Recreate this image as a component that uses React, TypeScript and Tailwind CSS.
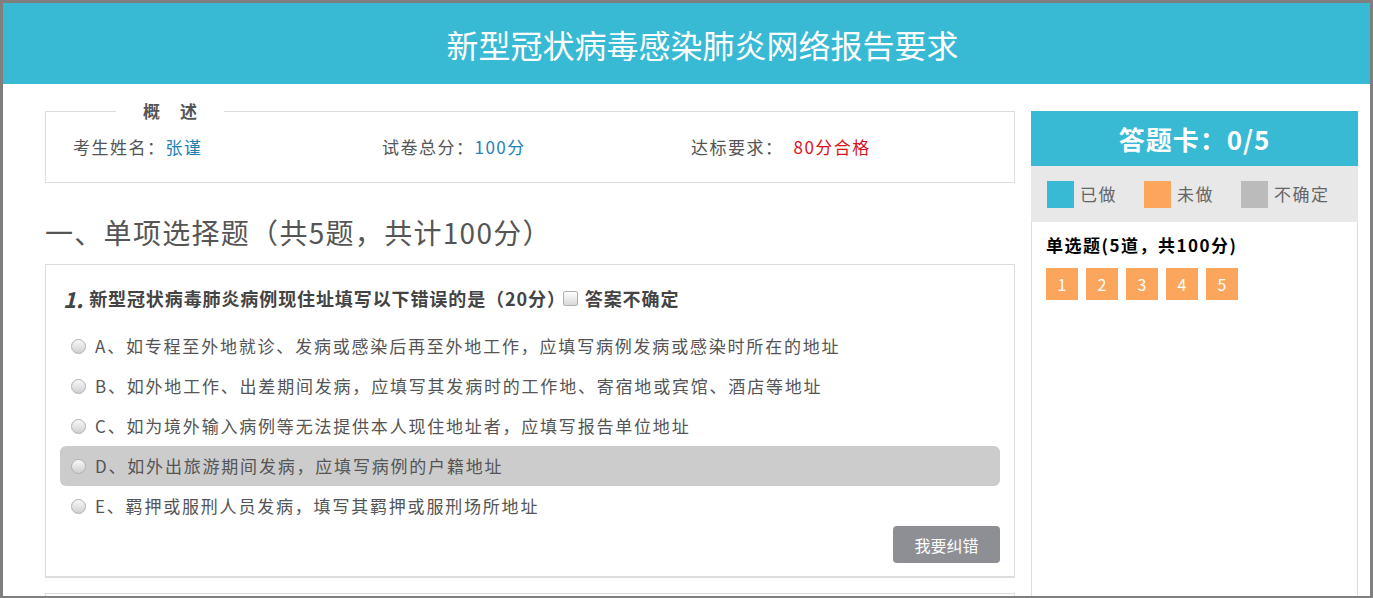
const options = [
  "A、如专程至外地就诊、发病或感染后再至外地工作，应填写病例发病或感染时所在的地址",
  "B、如外地工作、出差期间发病，应填写其发病时的工作地、寄宿地或宾馆、酒店等地址",
  "C、如为境外输入病例等无法提供本人现住地址者，应填写报告单位地址",
  "D、如外出旅游期间发病，应填写病例的户籍地址",
  "E、羁押或服刑人员发病，填写其羁押或服刑场所地址",
];

const font = "font-['Noto_Sans_CJK_SC','Noto_Sans',sans-serif]";

function Radio() {
  return (
    <span className="inline-block h-[15px] w-[15px] shrink-0 rounded-full border border-[#b0b0b0] bg-linear-to-b from-[#f8f8f8] to-[#d0d0d0]" />
  );
}

export default function App() {
  return (
    <div
      className={`h-[598px] w-full overflow-hidden border-t-[3px] border-r-[3px] border-b-[2px] border-l-[3px] border-[#7f7f7f] bg-white ${font}`}
    >
      {/* Header */}
      <header className="flex h-[81px] items-center justify-center bg-[#38b9d4] pl-[32px] text-[32px] text-white">
        新型冠状病毒感染肺炎网络报告要求
      </header>

      <div className="flex gap-[16px] pt-[15px] pr-[12px] pl-[42px]">
        {/* Left column */}
        <div className="w-[970px] shrink-0">
          <fieldset className="border border-[#dddddd]">
            <legend className="ml-[70px] px-[27px] text-[17px] leading-[24px] font-bold text-[#555]">
              概<span className="ml-[20px]">述</span>
            </legend>
            <div className="grid grid-cols-[309px_309px_1fr] pt-[12px] pb-[23px] pl-[27px] text-[17px] leading-[24px] tracking-[1.5px] text-[#555]">
              <div>
                考生姓名：<span className="text-[#1f82b6]">张谨</span>
              </div>
              <div>
                试卷总分：<span className="text-[#1f82b6]">100分</span>
              </div>
              <div>
                达标要求：<span className="ml-[10px] text-[#d7141a]">80分合格</span>
              </div>
            </div>
          </fieldset>

          <h2 className="mt-[29px] h-[40px] text-[28px] leading-[40px] tracking-[1.3px] text-[#555]">
            一、单项选择题（共5题，共计100分）
          </h2>

          <div className="mt-[12px] border border-b-2 border-[#dddddd] px-[14px] pt-[19px] pb-[13px]">
            <div className="flex h-[28px] items-center pl-[3px] font-bold text-[#444]">
              <span className="mr-[6px] text-[22px] italic">1.</span>
              <span className="text-[18px] tracking-[0.9px]">新型冠状病毒肺炎病例现住址填写以下错误的是（20分）</span>
              <span className="mr-[7px] -ml-[3px] inline-block h-[15px] w-[15px] rounded-[2px] border border-[#b0b0b0] bg-linear-to-b from-white to-[#d8d8d8]" />
              <span className="text-[18px] tracking-[0.9px]">答案不确定</span>
            </div>

            <div className="mt-[14px]">
              {options.map((opt, i) => (
                <div
                  key={opt}
                  className={`flex h-[40px] items-center gap-[9px] rounded-[6px] pl-[11px] text-[17px] tracking-[1.8px] text-[#555] ${
                    i === 3 ? "bg-[#cccccc]" : ""
                  }`}
                >
                  <Radio />
                  <span>{opt}</span>
                </div>
              ))}
            </div>

            <div className="flex justify-end">
              <button
                type="button"
                className="h-[37px] w-[107px] rounded-[4px] bg-[#8d8f95] text-[16px] text-white"
              >
                我要纠错
              </button>
            </div>
          </div>

          <div className="mt-[15px] h-[200px] border border-[#dddddd]" />
        </div>

        {/* Right column: answer card */}
        <div className="mt-[12px] w-[327px] shrink-0">
          <div className="flex h-[55px] items-center justify-center bg-[#38b9d4] text-[26px] font-bold tracking-[1px] text-white">
            答题卡：0/5
          </div>
          <div className="flex h-[56px] items-center gap-[27px] bg-[#e8e8e8] pl-[16px] text-[17px] tracking-[1.5px] text-[#666]">
            <div className="flex items-center gap-[6px]">
              <span className="h-[27px] w-[27px] bg-[#38b9d4]" />
              已做
            </div>
            <div className="flex items-center gap-[6px]">
              <span className="h-[27px] w-[27px] bg-[#fba65c]" />
              未做
            </div>
            <div className="flex items-center gap-[6px]">
              <span className="h-[27px] w-[27px] bg-[#bbbbbb]" />
              不确定
            </div>
          </div>
          <div className="h-[400px] border-x border-[#dddddd] pt-[11px] pl-[14px]">
            <div className="text-[17px] leading-[24px] font-bold tracking-[1.5px] text-black">
              单选题(5道，共100分)
            </div>
            <div className="mt-[11px] flex gap-[8px]">
              {[1, 2, 3, 4, 5].map((n) => (
                <span
                  key={n}
                  className="flex h-[32px] w-[32px] items-center justify-center bg-[#fba65c] text-[16px] text-white"
                >
                  {n}
                </span>
              ))}
            </div>
          </div>
        </div>
      </div>
    </div>
  );
}
